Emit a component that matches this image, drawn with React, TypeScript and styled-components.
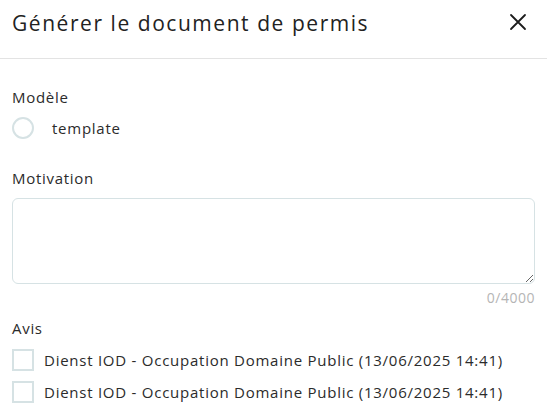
import styled, { createGlobalStyle } from 'styled-components'

const GlobalStyle = createGlobalStyle`
  body {
    margin: 0;
    background: #ffffff;
    font-family: "Open Sans", "Noto Sans", sans-serif;
    color: #2b2b2b;
  }
`

const avisItems = [
  'Dienst IOD - Occupation Domaine Public (13/06/2025 14:41)',
  'Dienst IOD - Occupation Domaine Public (13/06/2025 14:41)'
]

export default function App (): JSX.Element {
  return <Dialog>
    <GlobalStyle/>
    <Header>
      <Title>Générer le document de permis</Title>
      <CloseButton aria-label='Fermer'>
        <svg width='18' height='18' viewBox='0 0 18 18'>
          <path d='M2 2 L16 16 M16 2 L2 16' stroke='#1c1c1c' strokeWidth='1.8' strokeLinecap='round'/>
        </svg>
      </CloseButton>
    </Header>
    <Body>
      <Label $top={28}>Modèle</Label>
      <RadioRow>
        <RadioCircle/>
        <OptionText>template</OptionText>
      </RadioRow>
      <Label $top={29}>Motivation</Label>
      <TextArea/>
      <Counter>0/4000</Counter>
      <Label $top={10}>Avis</Label>
      <CheckList>
        {avisItems.map((item, i) => <CheckRow key={i}>
          <CheckBox/>
          <OptionText>{item}</OptionText>
        </CheckRow>)}
      </CheckList>
    </Body>
  </Dialog>
}

const Dialog = styled.div`
  width: 547px;
  height: 417px;
  overflow: hidden;
`

const Header = styled.header`
  display: flex;
  align-items: center;
  justify-content: space-between;
  height: 58px;
  padding: 0 20px 0 12px;
  border-bottom: 1px solid #e3e3e3;
`

const Title = styled.h2`
  margin: 0;
  font-size: 21px;
  letter-spacing: 1.55px;
  font-weight: 400;
  color: #222222;
  line-height: 28px;
  padding-bottom: 13px;
`

const CloseButton = styled.button`
  border: none;
  background: none;
  padding: 0;
  width: 18px;
  height: 18px;
  margin-bottom: 15px;
  cursor: pointer;
`

const Body = styled.div`
  padding: 0 12px;
  display: flex;
  flex-direction: column;
`

const Label = styled.div<{ $top: number }>`
  margin-top: ${p => p.$top}px;
  font-size: 15px;
  letter-spacing: 0.7px;
  line-height: 20px;
  color: #2b2b2b;
`

const RadioRow = styled.label`
  display: flex;
  align-items: center;
  gap: 18px;
  margin-top: 10px;
  height: 22px;
`

const RadioCircle = styled.span`
  box-sizing: border-box;
  width: 22px;
  height: 22px;
  border-radius: 50%;
  border: 2px solid #d6e2e4;
`

const OptionText = styled.span`
  font-size: 15px;
  letter-spacing: 0.75px;
  line-height: 20px;
  color: #2b2b2b;
`

const TextArea = styled.textarea`
  box-sizing: border-box;
  margin-top: 10px;
  width: 523px;
  height: 86px;
  border: 1px solid #d6e2e4;
  border-radius: 6px;
  resize: vertical;
  outline: none;
  font-family: inherit;
`

const Counter = styled.div`
  margin-top: 4px;
  text-align: right;
  font-size: 14px;
  letter-spacing: 0.5px;
  line-height: 20px;
  color: #b5b5b5;
`

const CheckList = styled.div`
  display: flex;
  flex-direction: column;
  gap: 10px;
  margin-top: 11px;
`

const CheckRow = styled.label`
  display: flex;
  align-items: center;
  gap: 10px;
  height: 22px;
`

const CheckBox = styled.span`
  box-sizing: border-box;
  width: 22px;
  height: 22px;
  border: 2px solid #d6e2e4;
`
